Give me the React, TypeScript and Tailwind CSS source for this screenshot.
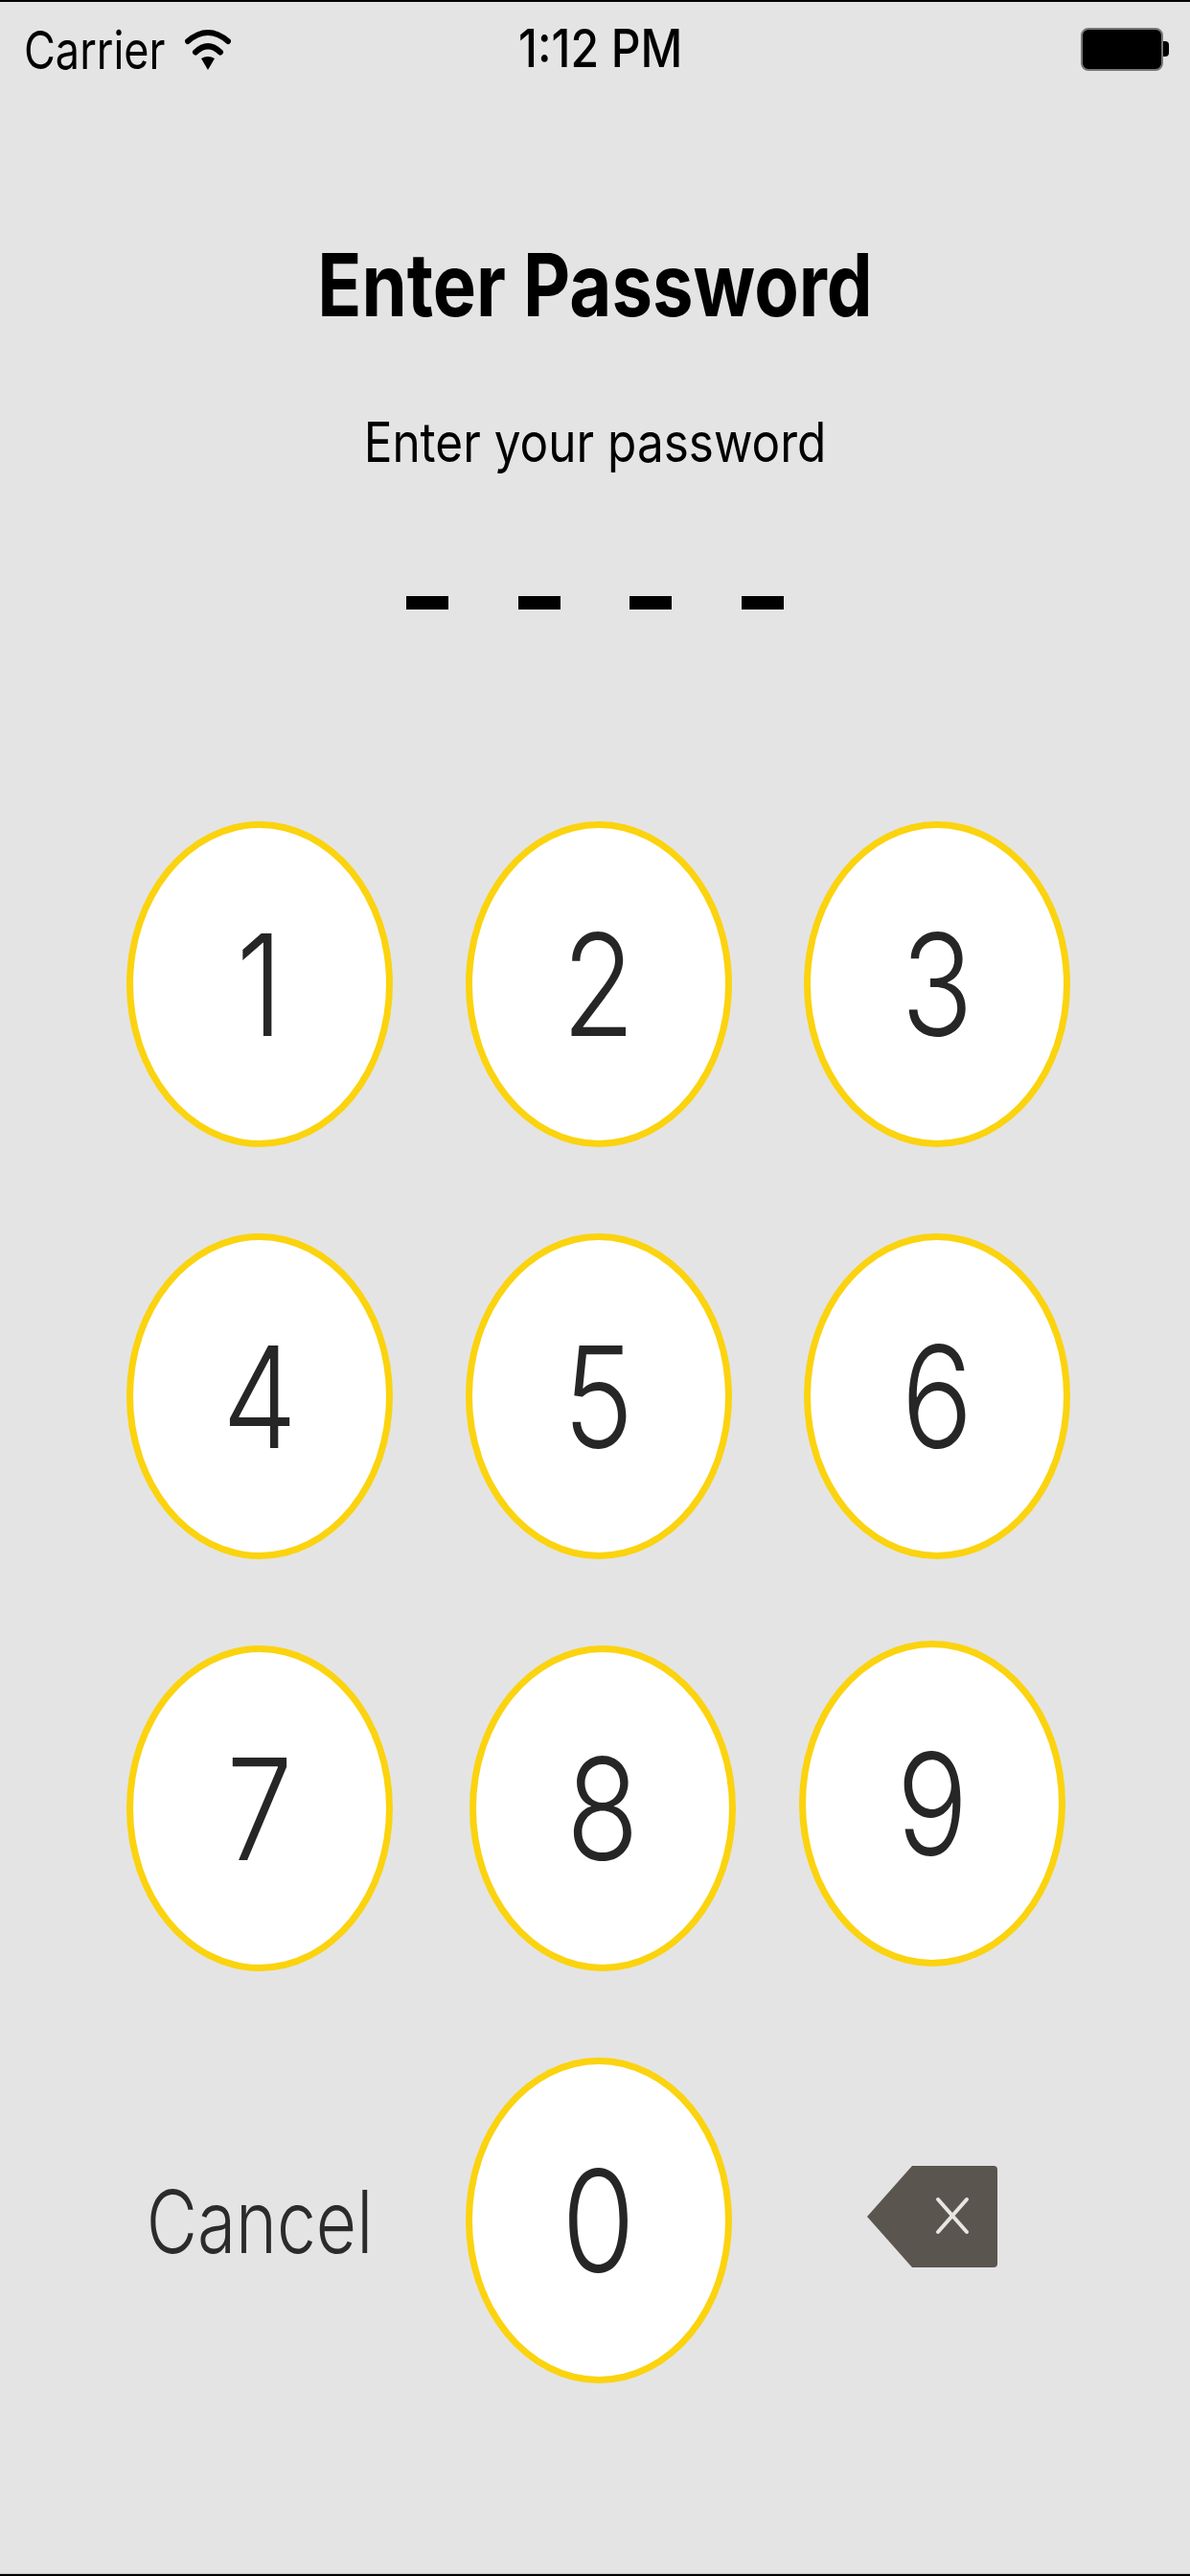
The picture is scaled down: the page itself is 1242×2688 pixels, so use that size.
function Key({ d, className = "" }: { d: string; className?: string }) {
  return (
    <div className={`w-[278px] h-[340px] shrink-0 rounded-[50%] border-[7px] border-[#fbd30e] bg-white flex items-center justify-center ${className}`}>
      <span className="block text-[#262626] text-[124px] leading-none font-light scale-y-[1.19]">{d}</span>
    </div>
  );
}

function Wifi() {
  return (
    <svg width="48" height="43" viewBox="0 0 48 43" className="shrink-0">
      <path d="M3 13 Q24 -5 45 13" fill="none" stroke="#000" strokeWidth="6" strokeLinecap="round" />
      <path d="M11 24.5 Q24 12 37 24.5" fill="none" stroke="#000" strokeWidth="6" strokeLinecap="round" />
      <path d="M17 31 Q24 27 31 31 L24 43 Z" fill="#000" />
    </svg>
  );
}

function Backspace() {
  return (
    <svg width="137" height="106" viewBox="0 0 137 106" className="shrink-0">
      <path d="M48 0 H133 Q137 0 137 4 V102 Q137 106 133 106 H48 L1 53 Z" fill="#5b554f" />
      <path d="M75 35 L105 69 M105 35 L75 69" fill="none" stroke="#e8e6e2" strokeWidth="4" strokeLinecap="round" />
    </svg>
  );
}

export default function App() {
  return (
    <div className="w-[1242px] h-[2688px] bg-[#e4e4e4] flex flex-col overflow-hidden text-black [font-family:Inter,'Liberation_Sans',sans-serif]">
      <div className="h-[2px] bg-black shrink-0" />

      <div className="h-[98px] shrink-0 flex items-center pl-[25px] pr-[22px]">
        <div className="w-[516px] flex items-center gap-[20px]">
          <span className="block text-[45px] leading-none scale-y-[1.217]">Carrier</span>
          <Wifi />
        </div>
        <span className="block text-[48px] leading-none font-medium scale-y-[1.14]">1:12 PM</span>
        <div className="ml-auto flex items-center">
          <div className="w-[86px] h-[45px] rounded-[8px] bg-black border-2 border-[#777777]" />
          <div className="w-[6px] h-[16px] rounded-r-[4px] bg-black" />
        </div>
      </div>

      <div className="flex flex-col items-center">
        <h1 className="mt-[156px] h-[80px] text-[76px] leading-[80px] font-bold scale-y-[1.2]">Enter Password</h1>
        <p className="mt-[95px] h-[60px] text-[49.5px] leading-[60px] scale-y-[1.16]">Enter your password</p>
        <div className="mt-[131px] flex gap-[72.5px] h-[14px]">
          <div className="w-[44px] h-[14px] bg-black" />
          <div className="w-[44px] h-[14px] bg-black" />
          <div className="w-[44px] h-[14px] bg-black" />
          <div className="w-[44px] h-[14px] bg-black" />
        </div>
      </div>

      <div className="mt-[221px] pl-[132px] flex flex-col gap-[90px]">
        <div className="flex items-start h-[340px] gap-[75.5px]">
          <Key d="1" />
          <Key d="2" />
          <Key d="3" />
        </div>
        <div className="flex items-start h-[340px] gap-[75.5px]">
          <Key d="4" />
          <Key d="5" />
          <Key d="6" />
        </div>
        <div className="flex items-start h-[340px]">
          <Key d="7" />
          <Key d="8" className="ml-[80px]" />
          <Key d="9" className="ml-[66px] -mt-[5px]" />
        </div>
        <div className="flex items-center h-[340px]">
          <div className="w-[278px] flex justify-center">
            <span className="block text-[#2b2b2b] text-[73px] leading-none font-light scale-y-[1.25]">Cancel</span>
          </div>
          <Key d="0" className="ml-[75.5px]" />
          <div className="ml-[140px] -mt-[8px]">
            <Backspace />
          </div>
        </div>
      </div>

      <div className="mt-auto shrink-0 h-[1px] bg-[#c8c8c8]" />
      <div className="shrink-0 h-[2px] bg-black" />
    </div>
  );
}
